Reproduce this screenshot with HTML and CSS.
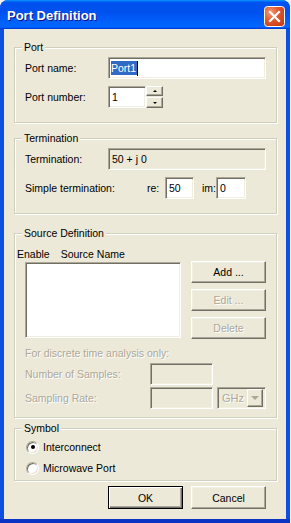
FILE: index.html
```html
<!DOCTYPE html>
<html lang="en">
<head>
    <meta charset="UTF-8">
    <meta name="viewport" content="width=device-width, initial-scale=1.0">
    <title>Port Definition</title>
    <link rel="stylesheet" href="styles.css">
</head>
<body>

    <div class="window">
        <div class="titlebar">
            <span class="title">Port Definition</span>
            <svg class="close" width="21" height="21" viewBox="0 0 21 21">
                <defs>
                    <radialGradient id="closeGlow" cx="0.3" cy="0.3" r="0.9">
                        <stop offset="0" stop-color="#f29c7b"/>
                        <stop offset="0.45" stop-color="#e2582f"/>
                        <stop offset="1" stop-color="#c23a13"/>
                    </radialGradient>
                </defs>
                <rect x="0.5" y="0.5" width="20" height="20" rx="3" fill="url(#closeGlow)" stroke="#fff"/>
                <path d="M6 6 L15 15 M15 6 L6 15" stroke="#fff" stroke-width="2.2" stroke-linecap="square"/>
            </svg>
        </div>

        <div class="client">
            <fieldset class="group group-port">
                <legend>Port</legend>
                <div class="row">
                    <span class="label">Port name:</span>
                    <div class="field field-wide"><span class="sel">Port1</span><span class="caret"></span></div>
                </div>
                <div class="row row-gap">
                    <span class="label">Port number:</span>
                    <div class="field field-num">1</div>
                    <div class="spin">
                        <div class="spin-btn spin-up"><span class="tri-up"></span></div>
                        <div class="spin-btn spin-down"><span class="tri-down"></span></div>
                    </div>
                </div>
            </fieldset>

            <fieldset class="group group-term">
                <legend>Termination</legend>
                <div class="row">
                    <span class="label">Termination:</span>
                    <div class="field field-wide readonly">50 + j 0</div>
                </div>
                <div class="row row-gap">
                    <span class="label label-long">Simple termination:</span>
                    <span class="unit unit-re">re:</span>
                    <div class="field field-re">50</div>
                    <span class="unit unit-im">im:</span>
                    <div class="field field-im">0</div>
                </div>
            </fieldset>

            <fieldset class="group group-source">
                <legend>Source Definition</legend>
                <div class="list-head">
                    <span class="col-enable">Enable</span>
                    <span>Source Name</span>
                </div>
                <div class="source-row">
                    <div class="listbox"></div>
                    <div class="btn-col">
                        <div class="btn">Add ...</div>
                        <div class="btn disabled">Edit ...</div>
                        <div class="btn disabled">Delete</div>
                    </div>
                </div>
                <div class="note disabled-text">For discrete time analysis only:</div>
                <div class="row row-samples">
                    <span class="label label-disc disabled-text">Number of Samples:</span>
                    <div class="field field-disc readonly"></div>
                </div>
                <div class="row row-rate">
                    <span class="label label-disc disabled-text">Sampling Rate:</span>
                    <div class="field field-disc readonly"></div>
                    <div class="combo">
                        <span class="combo-text disabled-text">GHz</span>
                        <div class="combo-btn"><span class="tri-down tri-big"></span></div>
                    </div>
                </div>
            </fieldset>

            <fieldset class="group group-symbol">
                <legend>Symbol</legend>
                <div class="radio-row">
                    <span class="radio checked"></span>
                    <span>Interconnect</span>
                </div>
                <div class="radio-row">
                    <span class="radio"></span>
                    <span>Microwave Port</span>
                </div>
            </fieldset>

            <div class="actions">
                <div class="btn btn-default">OK</div>
                <div class="btn">Cancel</div>
            </div>
        </div>
    </div>

</body>
</html>
```

FILE: styles.css
```css
body {
    margin: 0;
    background: #f2f2f2;
    font-family: "Liberation Sans", Arial, sans-serif;
    font-size: 10.5px;
    color: #000;
}
.window {
    width: 290px;
    height: 523px;
    display: flex;
    flex-direction: column;
    background: #0b4fe3;
    border-radius: 8px 8px 0 0;
    box-shadow: inset 0 -4px #0a34c4;
}
.titlebar {
    height: 29px;
    display: flex;
    align-items: center;
    justify-content: space-between;
    padding: 0 5px 0 7px;
    border-radius: 8px 8px 0 0;
    background: linear-gradient(180deg, #0997ff, #0053ee 8%, #0050ee 40%, #06f 88%, #06f 93%, #005bff 95%, #003dd7 96%, #003dd7);
}
.title {
    color: #fff;
    font-size: 13px;
    font-weight: bold;
    text-shadow: 1px 1px #0f1089;
    margin-top: 2px;
}
.close {
    display: block;
    margin-top: 3px;
}
.client {
    flex: 1;
    margin: 0 4px 4px 4px;
    background: #ece9d8;
    padding: 12px 9px 0 10px;
}

/* group boxes */
.group {
    margin: 0;
    padding: 3px 10px 14px 10px;
    border: 1px solid #d0d0bf;
    box-shadow: inset 1px 1px #fff, 1px 1px #fff;
    min-inline-size: 0;
}
.group legend {
    padding: 0 2px;
    margin-left: -3px;
    line-height: 13px;
    height: 13px;
    background: #ece9d8;
}
.group-term {
    margin-top: 9px;
}
.group-source {
    margin-top: 13px;
    padding-top: 0;
    padding-bottom: 8px;
}
.group-symbol {
    margin-top: 4px;
    padding-top: 2px;
    padding-bottom: 2px;
}

.row {
    display: flex;
    align-items: center;
    height: 22px;
}
.row-gap {
    margin-top: 7px;
}
.label {
    width: 83px;
    flex: none;
}
.label-long {
    width: 122px;
}
.label-disc {
    width: 125px;
}

/* sunken edit fields */
.field {
    box-sizing: border-box;
    flex: none;
    height: 22px;
    padding: 0 3px;
    display: flex;
    align-items: center;
    background: #fff;
    border: 1px solid;
    border-color: #aca899 #fff #fff #aca899;
    box-shadow: inset 1px 1px #716f64, inset -1px -1px #f1efe2;
    white-space: nowrap;
}
.field.readonly {
    background: #ece9d8;
}
.field-wide {
    width: 158px;
}
.field-num {
    width: 38px;
}
.field-re {
    width: 29px;
}
.field-im {
    width: 30px;
}
.field-disc {
    width: 63px;
}
.sel {
    background: #316ac5;
    color: #fff;
    padding: 1px 1px 1px 0;
    margin-left: -1px;
}
.caret {
    width: 1px;
    height: 15px;
    background: #000;
}
.unit {
    flex: none;
    white-space: nowrap;
}
.unit-re {
    width: 18px;
}
.unit-im {
    width: 14px;
    margin-left: 8px;
}

/* spinner */
.spin {
    display: flex;
    flex-direction: column;
    gap: 1px;
    align-self: flex-end;
}
.spin-btn {
    box-sizing: border-box;
    width: 17px;
    height: 10px;
    display: flex;
    align-items: center;
    justify-content: center;
    background: #ece9d8;
    border: 1px solid;
    border-color: #fff #716f64 #716f64 #fff;
    box-shadow: inset -1px -1px #aca899;
}
.spin-down {
    height: 11px;
}
.tri-up {
    width: 0;
    height: 0;
    border-left: 2px solid transparent;
    border-right: 2px solid transparent;
    border-bottom: 2px solid #000;
}
.tri-down {
    width: 0;
    height: 0;
    border-left: 2px solid transparent;
    border-right: 2px solid transparent;
    border-top: 2px solid #000;
}

/* source definition */
.list-head {
    margin: 8px 0 0 -8px;
    line-height: 13px;
    height: 13px;
}
.col-enable {
    margin-right: 8px;
}
.source-row {
    display: flex;
    align-items: flex-start;
}
.listbox {
    box-sizing: border-box;
    width: 156px;
    height: 76px;
    margin-top: 1px;
    background: #fff;
    border: 1px solid;
    border-color: #aca899 #fff #fff #aca899;
    box-shadow: inset 1px 1px #716f64, inset -1px -1px #f1efe2;
}
.btn-col {
    display: flex;
    flex-direction: column;
    gap: 6px;
    margin-left: 10px;
}
.btn {
    box-sizing: border-box;
    width: 75px;
    height: 22px;
    display: flex;
    align-items: center;
    justify-content: center;
    background: #ece9d8;
    border: 1px solid;
    border-color: #fff #716f64 #716f64 #fff;
    box-shadow: inset -1px -1px #aca899, inset 1px 1px #f1efe2;
}
.btn.disabled,
.disabled-text {
    color: #aca899;
    text-shadow: 1px 1px #fff;
}
.note {
    margin-top: 8px;
    line-height: 13px;
}
.row-samples {
    margin-top: 3px;
}
.row-rate {
    margin-top: 2px;
}
.combo {
    box-sizing: border-box;
    width: 49px;
    height: 22px;
    margin-left: 4px;
    display: flex;
    align-items: center;
    justify-content: space-between;
    padding: 2px;
    border: 1px solid;
    border-color: #aca899 #fff #fff #aca899;
    box-shadow: inset 1px 1px #716f64, inset -1px -1px #f1efe2;
}
.combo-text {
    padding-left: 2px;
    font-size: 11px;
}
.combo-btn {
    box-sizing: border-box;
    width: 16px;
    height: 18px;
    display: flex;
    align-items: center;
    justify-content: center;
    border: 1px solid;
    border-color: #fff #716f64 #716f64 #fff;
    box-shadow: inset -1px -1px #aca899;
}
.tri-big {
    border-left-width: 4px;
    border-right-width: 4px;
    border-top: 4px solid #aca899;
}

/* symbol radios */
.radio-row {
    display: flex;
    align-items: center;
    height: 20px;
}
.radio-row + .radio-row {
    margin-top: 1px;
}
.radio {
    box-sizing: border-box;
    width: 13px;
    height: 13px;
    margin: 0 4px 0 1px;
    border-radius: 50%;
    background: #fff;
    border: 1px solid;
    border-color: #aca899 #fff #fff #aca899;
    box-shadow: inset 1px 1px #716f64, inset -1px -1px #e4e1d2;
    display: flex;
    align-items: center;
    justify-content: center;
}
.radio.checked::after {
    content: "";
    width: 4px;
    height: 4px;
    border-radius: 50%;
    background: #000;
}

/* dialog buttons */
.actions {
    display: flex;
    justify-content: flex-end;
    gap: 8px;
    margin-top: 5px;
    padding-right: 11px;
}
.actions .btn {
    height: 23px;
}
.btn-default {
    border: 1px solid #000;
    box-shadow: inset 1px 1px #fff, inset -1px -1px #716f64, inset -2px -2px #aca899;
}
```
